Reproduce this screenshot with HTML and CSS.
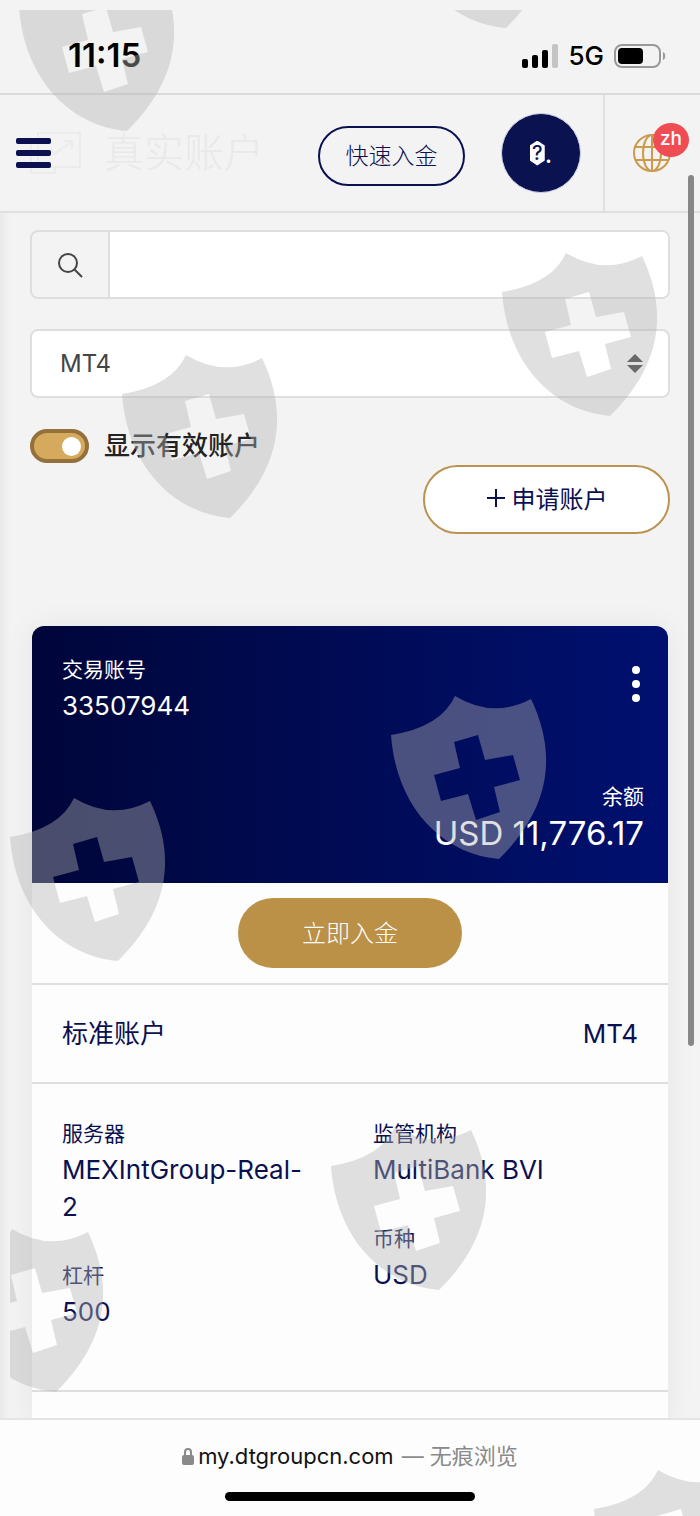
FILE: index.html
```
<!DOCTYPE html>
<html lang="zh">
<head>
<meta charset="UTF-8">
<meta name="viewport" content="width=device-width, initial-scale=1.0">
<title>真实账户</title>
<link rel="stylesheet" href="styles.css">
</head>
<body>

<div class="screen">
    <div class="status-bar">
        <span class="clock">11:15</span>
        <div class="status-icons">
            <svg width="36" height="24" viewBox="0 0 36 24">
                <rect x="0" y="15" width="6" height="9" rx="2"/>
                <rect x="10" y="11" width="6" height="13" rx="2"/>
                <rect x="20" y="6" width="6" height="18" rx="2"/>
                <rect x="30" y="0" width="6" height="24" rx="2" fill="#c4c4c4"/>
            </svg>
            <span class="network">5G</span>
            <svg width="52" height="24" viewBox="0 0 52 24">
                <rect x="1" y="1" width="45" height="22" rx="7" fill="none" stroke="#999" stroke-width="2"/>
                <rect x="4" y="4" width="25" height="16" rx="4"/>
                <path d="M49 8c3 1 3 7 0 8z" fill="#999"/>
            </svg>
        </div>
    </div>

    <header class="header">
        <button class="menu-btn" aria-label="菜单"><span></span><span></span><span></span></button>
        <div class="page-title">
            <svg width="52" height="44" viewBox="0 0 52 44" fill="none" stroke="#ebebeb" stroke-width="2">
                <path d="M8 2h42v34H8z"/>
                <path d="M1 12v30h24v-7M12 26l8-7 5 4 13-10M34 10h8v8M42 10l-6 6"/>
            </svg>
            <span>真实账户</span>
        </div>
        <button class="btn quick-btn">快速入金</button>
        <a href="#" class="avatar"><span class="unknown">?</span>.</a>
        <div class="language">
            <a href="#" class="language-link" aria-label="语言">
                <svg width="38" height="38" viewBox="0 0 38 38" fill="none" stroke="#cb9a4d" stroke-width="2">
                    <circle cx="19" cy="19" r="18"/>
                    <ellipse cx="19" cy="19" rx="9" ry="18"/>
                    <path d="M19 1v36M3 13h32M3 26h32"/>
                </svg>
                <span class="badge">zh</span>
            </a>
        </div>
    </header>

    <main class="content">
        <div class="search">
            <label for="search">
                <svg width="26" height="26" viewBox="0 0 26 26" fill="none" stroke="#444" stroke-width="2">
                    <circle cx="11" cy="11" r="9"/>
                    <path d="M17 17l8 8"/>
                </svg>
            </label>
            <input type="text" id="search" aria-label="搜索">
        </div>
        <div class="platform">
            <select aria-label="平台">
                <option>MT4</option>
                <option>MT5</option>
            </select>
            <svg width="16" height="20" viewBox="0 0 16 20" fill="#333">
                <path d="M8 0l8 8H0zM8 19l8-8H0z"/>
            </svg>
        </div>
        <div class="toggle">
            <input type="checkbox" id="active-only" checked>
            <label for="active-only">显示有效账户</label>
        </div>
        <button class="btn apply-btn">
            <svg width="20" height="20" viewBox="0 0 20 20" fill="none" stroke="#0a1050" stroke-width="2">
                <path d="M10 1v18M1 10h18"/>
            </svg>
            申请账户
        </button>

        <section class="card">
            <div class="card-top">
                <div class="account">
                    <div>
                        <div class="label">交易账号</div>
                        <div class="value">33507944</div>
                    </div>
                    <button class="more-btn" aria-label="更多">
                        <svg width="8" height="36" viewBox="0 0 8 36" fill="#fff">
                            <circle cx="4" cy="4" r="4"/>
                            <circle cx="4" cy="18" r="4"/>
                            <circle cx="4" cy="32" r="4"/>
                        </svg>
                    </button>
                </div>
                <div class="balance">
                    <div class="label">余额</div>
                    <div class="amount">USD 11,776.17</div>
                </div>
            </div>
            <div class="card-action">
                <button class="btn deposit-btn">立即入金</button>
            </div>
            <div class="card-type">
                <span>标准账户</span>
                <span>MT4</span>
            </div>
            <div class="details">
                <div class="details-col">
                    <div>
                        <div class="label">服务器</div>
                        <div class="value">MEXIntGroup-Real-<br>2</div>
                    </div>
                    <div>
                        <div class="label">杠杆</div>
                        <div class="value">500</div>
                    </div>
                </div>
                <div class="details-col">
                    <div>
                        <div class="label">监管机构</div>
                        <div class="value">MultiBank BVI</div>
                    </div>
                    <div>
                        <div class="label">币种</div>
                        <div class="value">USD</div>
                    </div>
                </div>
            </div>
        </section>
    </main>

    <footer class="browser-bar">
        <div class="address">
            <svg width="12" height="18" viewBox="0 0 12 18">
                <path d="M3 9V5a3 3 0 0 1 6 0v4" fill="none" stroke="#8a8a8a" stroke-width="2"/>
                <rect x="0" y="8" width="12" height="10" rx="2" fill="#8a8a8a"/>
            </svg>
            <span>my.dtgroupcn.com</span>
            <span class="private">— 无痕浏览</span>
        </div>
        <div class="home-indicator"></div>
    </footer>

    <div class="scrollbar"></div>

    <!-- shield watermark over the whole screen -->
    <svg class="watermark">
        <defs>
            <path id="shield" fill-rule="evenodd" d="M0 39Q50 31 64 0Q102 23 140 3C165 55 162 110 108 163C50 158 5 110 0 39ZM63 46L87 39L94 64L122 59L129 84L103 91L109 116L85 124L77 98L50 105L43 79L69 72Z"/>
        </defs>
        <use href="#shield" x="9" y="-42"/>
        <use href="#shield" x="388" y="-145"/>
        <use href="#shield" x="492" y="243"/>
        <use href="#shield" x="112" y="345"/>
        <use href="#shield" x="381" y="686"/>
        <use href="#shield" x="0" y="788"/>
        <use href="#shield" x="321" y="1117"/>
        <use href="#shield" x="-62" y="1219"/>
        <use href="#shield" x="584" y="1460"/>
    </svg>
</div>

</body>
</html>
```
FILE: styles.css
```
* {
    box-sizing: border-box;
}
body {
    margin: 0;
    font-family: Inter, "Noto Sans CJK SC", sans-serif;
    font-size: 26px;
    color: #0a1050;
    background: #f3f3f3;
}
button, input, select {
    font-family: inherit;
    font-size: inherit;
    color: inherit;
}
svg {
    display: block;
}
.screen {
    position: relative;
    display: flex;
    flex-direction: column;
    height: 100vh;
    overflow: hidden;
}

/* status bar */
.status-bar {
    display: flex;
    justify-content: space-between;
    align-items: center;
    padding: 36px 34px 18px 68px;
    color: #000;
    border-bottom: 2px solid #dadada;
}
.clock {
    font-size: 33px;
    font-weight: 600;
    line-height: 39px;
}
.status-icons {
    display: flex;
    align-items: center;
    gap: 10px;
}
.network {
    font-size: 26px;
    font-weight: 500;
    line-height: 30px;
}

/* header */
.header {
    display: flex;
    align-items: center;
    height: 118px;
    flex-shrink: 0;
    padding-left: 16px;
    border-bottom: 2px solid #dfdfdf;
}
.menu-btn {
    display: flex;
    flex-direction: column;
    gap: 6px;
    width: 35px;
    padding: 0;
    border: none;
    background: none;
    z-index: 1;
}
.menu-btn span {
    height: 6px;
    border-radius: 2px;
    background: #0a1050;
}
.page-title {
    display: flex;
    align-items: center;
    gap: 22px;
    margin-left: -21px;
    font-size: 40px;
    font-weight: 300;
    line-height: 60px;
    color: #e9e9e9;
}
.btn {
    display: flex;
    align-items: center;
    justify-content: center;
    gap: 6px;
    padding: 0 0 4px;
    border-radius: 40px;
    font-size: 24px;
    font-weight: 300;
    cursor: pointer;
}
.quick-btn {
    width: 147px;
    height: 60px;
    margin-top: 6px;
    margin-left: auto;
    border: 2px solid #0a1050;
    background: none;
    font-size: 23px;
}
.avatar {
    display: flex;
    align-items: center;
    justify-content: center;
    width: 80px;
    height: 80px;
    margin: 0 22px 0 36px;
    border: 1px solid #cfd2e6;
    border-radius: 50%;
    background: #0a1350;
    color: #fff;
    font-size: 26px;
    text-decoration: none;
}
.unknown {
    width: 15px;
    background: #fff;
    color: #0a1350;
    font-size: 20px;
    font-weight: 500;
    line-height: 25px;
    text-align: center;
    clip-path: polygon(50% 0, 100% 20%, 100% 80%, 50% 100%, 0 80%, 0 20%);
}
.language {
    display: flex;
    align-items: center;
    align-self: stretch;
    width: 97px;
    padding-left: 28px;
    border-left: 2px solid #dfdfdf;
}
.language-link {
    position: relative;
    text-decoration: none;
}
.badge {
    position: absolute;
    left: 20px;
    top: -11px;
    width: 36px;
    height: 34px;
    border-radius: 50%;
    background: #f04c54;
    color: #fff;
    font-size: 19px;
    font-weight: 500;
    line-height: 32px;
    text-align: center;
}

/* filters */
.content {
    display: flex;
    flex-direction: column;
    flex: 1;
    min-height: 0;
    padding: 17px 30px 0;
    overflow: hidden;
    background: linear-gradient(to right, #e9e9e9, #f3f3f3 10px);
}
.content > * {
    flex-shrink: 0;
}
.search {
    display: flex;
    height: 69px;
    border: 2px solid #dedede;
    border-radius: 8px;
    overflow: hidden;
}
.search label {
    display: flex;
    align-items: center;
    justify-content: center;
    width: 78px;
    border-right: 2px solid #dedede;
}
.search input {
    flex: 1;
    min-width: 0;
    padding: 0 20px;
    border: none;
    background: #fff;
}
.platform {
    position: relative;
    margin-top: 30px;
}
.platform select {
    display: block;
    width: 100%;
    height: 69px;
    padding: 0 28px;
    border: 2px solid #dedede;
    border-radius: 8px;
    background: #fff;
    color: #444;
    font-size: 24px;
    appearance: none;
}
.platform svg {
    position: absolute;
    right: 27px;
    top: 25px;
    pointer-events: none;
}
.toggle {
    display: flex;
    align-items: center;
    gap: 15px;
    margin-top: 31px;
    color: #222;
    font-weight: 500;
    line-height: 34px;
}
.toggle input {
    display: flex;
    align-items: center;
    justify-content: flex-end;
    width: 59px;
    height: 34px;
    margin: 0;
    padding-right: 4px;
    border: 4px solid #94713b;
    border-radius: 17px;
    background: #d5aa5c;
    appearance: none;
}
.toggle input::before {
    content: "";
    width: 19px;
    height: 19px;
    border-radius: 50%;
    background: #fff;
}
.apply-btn {
    align-self: flex-end;
    width: 247px;
    height: 69px;
    margin-top: 2px;
    border: 2px solid #bb9250;
    background: #fff;
    font-weight: 400;
}

/* account card */
.card {
    margin: 92px 2px 0;
    border-radius: 12px 12px 0 0;
    background: #fdfdfd;
    box-shadow: 0 0 30px rgba(0, 0, 0, 0.06);
    min-height: 800px;
}
.label {
    font-size: 21px;
    line-height: 34px;
}
.value {
    font-size: 26px;
    line-height: 37px;
}
.card-top {
    padding: 27px 24px 31px 30px;
    border-radius: 12px 12px 0 0;
    background: linear-gradient(to right, #00063a, #001070);
    color: #fff;
}
.account {
    display: flex;
    justify-content: space-between;
}
.more-btn {
    align-self: flex-start;
    margin-top: 13px;
    padding: 0 4px;
    border: none;
    background: none;
}
.balance {
    margin-top: 56px;
    text-align: right;
}
.amount {
    font-size: 33px;
    line-height: 38px;
}
.card-action {
    display: flex;
    justify-content: center;
    padding: 15px;
}
.deposit-btn {
    width: 224px;
    height: 70px;
    border: none;
    background: #bb9148;
    color: #fff;
}
.card-type {
    display: flex;
    justify-content: space-between;
    align-items: center;
    padding: 30px;
    line-height: 37px;
    border-top: 2px solid #dedede;
    border-bottom: 2px solid #dedede;
}
.details {
    display: grid;
    grid-template-columns: 1fr 1fr;
    gap: 46px;
    padding: 33px 30px 60px;
    border-bottom: 2px solid #dedede;
}
.details-col {
    display: flex;
    flex-direction: column;
    gap: 34px;
    min-width: 0;
}

/* browser chrome */
.browser-bar {
    display: flex;
    flex-direction: column;
    align-items: center;
    gap: 19px;
    padding: 19px 0 15px;
    border-top: 2px solid #e4e4e4;
    background: #fdfdfd;
}
.address {
    display: flex;
    align-items: center;
    gap: 4px;
    color: #111;
    font-size: 22px;
    line-height: 34px;
}
.private {
    margin-left: 4px;
    color: #8a8a8a;
}
.home-indicator {
    width: 250px;
    height: 9px;
    border-radius: 5px;
    background: #000;
}
.scrollbar {
    position: absolute;
    top: 175px;
    right: 6px;
    width: 6px;
    height: 871px;
    border-radius: 3px;
    background: #878787;
}
.watermark {
    position: absolute;
    top: 10px;
    left: 10px;
    width: calc(100% - 10px);
    height: calc(100% - 10px);
    fill: rgba(180, 180, 180, 0.41);
    pointer-events: none;
}
```
